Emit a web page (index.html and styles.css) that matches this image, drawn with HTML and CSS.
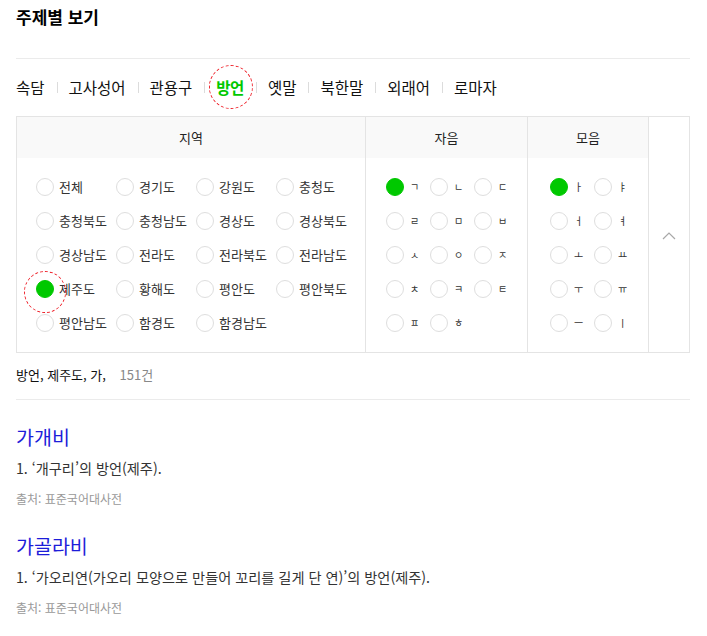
FILE: index.html
```html
<!DOCTYPE html>
<html lang="ko">
<head>
<meta charset="utf-8">
<title>주제별 보기</title>
<link rel="stylesheet" href="styles.css">
</head>
<body>
<div class="page">
  <h2 class="title">주제별 보기</h2>

  <ul class="tabs">
    <li class="tab">속담</li>
    <li class="tab">고사성어</li>
    <li class="tab">관용구</li>
    <li class="tab active marked">방언</li>
    <li class="tab">옛말</li>
    <li class="tab">북한말</li>
    <li class="tab">외래어</li>
    <li class="tab">로마자</li>
  </ul>

  <div class="filter">
    <div class="col col-region">
      <div class="col-head">지역</div>
      <div class="col-body grid-region">
        <label class="opt"><span class="radio"></span><span class="lbl">전체</span></label>
        <label class="opt"><span class="radio"></span><span class="lbl">경기도</span></label>
        <label class="opt"><span class="radio"></span><span class="lbl">강원도</span></label>
        <label class="opt"><span class="radio"></span><span class="lbl">충청도</span></label>
        <label class="opt"><span class="radio"></span><span class="lbl">충청북도</span></label>
        <label class="opt"><span class="radio"></span><span class="lbl">충청남도</span></label>
        <label class="opt"><span class="radio"></span><span class="lbl">경상도</span></label>
        <label class="opt"><span class="radio"></span><span class="lbl">경상북도</span></label>
        <label class="opt"><span class="radio"></span><span class="lbl">경상남도</span></label>
        <label class="opt"><span class="radio"></span><span class="lbl">전라도</span></label>
        <label class="opt"><span class="radio"></span><span class="lbl">전라북도</span></label>
        <label class="opt"><span class="radio"></span><span class="lbl">전라남도</span></label>
        <label class="opt"><span class="radio on marked"></span><span class="lbl">제주도</span></label>
        <label class="opt"><span class="radio"></span><span class="lbl">황해도</span></label>
        <label class="opt"><span class="radio"></span><span class="lbl">평안도</span></label>
        <label class="opt"><span class="radio"></span><span class="lbl">평안북도</span></label>
        <label class="opt"><span class="radio"></span><span class="lbl">평안남도</span></label>
        <label class="opt"><span class="radio"></span><span class="lbl">함경도</span></label>
        <label class="opt"><span class="radio"></span><span class="lbl">함경남도</span></label>
      </div>
    </div>
    <div class="col col-cons">
      <div class="col-head">자음</div>
      <div class="col-body grid-cons">
        <label class="opt"><span class="radio on"></span><span class="jamo">ㄱ</span></label>
        <label class="opt"><span class="radio"></span><span class="jamo">ㄴ</span></label>
        <label class="opt"><span class="radio"></span><span class="jamo">ㄷ</span></label>
        <label class="opt"><span class="radio"></span><span class="jamo">ㄹ</span></label>
        <label class="opt"><span class="radio"></span><span class="jamo">ㅁ</span></label>
        <label class="opt"><span class="radio"></span><span class="jamo">ㅂ</span></label>
        <label class="opt"><span class="radio"></span><span class="jamo">ㅅ</span></label>
        <label class="opt"><span class="radio"></span><span class="jamo">ㅇ</span></label>
        <label class="opt"><span class="radio"></span><span class="jamo">ㅈ</span></label>
        <label class="opt"><span class="radio"></span><span class="jamo">ㅊ</span></label>
        <label class="opt"><span class="radio"></span><span class="jamo">ㅋ</span></label>
        <label class="opt"><span class="radio"></span><span class="jamo">ㅌ</span></label>
        <label class="opt"><span class="radio"></span><span class="jamo">ㅍ</span></label>
        <label class="opt"><span class="radio"></span><span class="jamo">ㅎ</span></label>
      </div>
    </div>
    <div class="col col-vow">
      <div class="col-head">모음</div>
      <div class="col-body grid-vow">
        <label class="opt"><span class="radio on"></span><span class="jamo">ㅏ</span></label>
        <label class="opt"><span class="radio"></span><span class="jamo">ㅑ</span></label>
        <label class="opt"><span class="radio"></span><span class="jamo">ㅓ</span></label>
        <label class="opt"><span class="radio"></span><span class="jamo">ㅕ</span></label>
        <label class="opt"><span class="radio"></span><span class="jamo">ㅗ</span></label>
        <label class="opt"><span class="radio"></span><span class="jamo">ㅛ</span></label>
        <label class="opt"><span class="radio"></span><span class="jamo">ㅜ</span></label>
        <label class="opt"><span class="radio"></span><span class="jamo">ㅠ</span></label>
        <label class="opt"><span class="radio"></span><span class="jamo">ㅡ</span></label>
        <label class="opt"><span class="radio"></span><span class="jamo">ㅣ</span></label>
      </div>
    </div>
    <div class="col col-toggle">
      <svg class="chev" width="14" height="8" viewBox="0 0 14 8" aria-hidden="true"><polyline points="1,7 7,1 13,7" fill="none" stroke="#a8a8a8" stroke-width="1.2"/></svg>
    </div>
  </div>

  <div class="summary">방언, 제주도, 가, <span class="count">151건</span></div>

  <div class="entry">
    <div class="word">가개비</div>
    <p class="def">1. ‘개구리’의 방언(제주).</p>
    <p class="src">출처: 표준국어대사전</p>
  </div>
  <div class="entry">
    <div class="word">가골라비</div>
    <p class="def">1. ‘가오리연(가오리 모양으로 만들어 꼬리를 길게 단 연)’의 방언(제주).</p>
    <p class="src">출처: 표준국어대사전</p>
  </div>
</div>
</body>
</html>
```

FILE: styles.css
```css
* { box-sizing: border-box; }
html, body { margin: 0; padding: 0; background: #fff; }
body {
  font-family: "Noto Sans CJK KR", "Noto Sans", "Liberation Sans", sans-serif;
  color: #222;
}
.page {
  width: 674px;
  margin-left: 16px;
}
.title {
  margin: 0;
  height: 59px;
  padding-top: 5px;
  font-size: 17px;
  line-height: 24px;
  font-weight: 700;
  color: #000;
  border-bottom: 1px solid #ebebeb;
}
.tabs {
  list-style: none;
  margin: 18px 0 0;
  padding: 0;
  display: flex;
  align-items: center;
  height: 20px;
}
.tab {
  position: relative;
  font-size: 15.5px;
  line-height: 20px;
  color: #111;
  padding: 0 12px;
}
.tab:first-child { padding-left: 0; }
.tab + .tab::before {
  content: "";
  position: absolute;
  left: 0;
  top: 5px;
  width: 1px;
  height: 11px;
  background: #dcdcdc;
}
.tab.active {
  color: #00c800;
  font-weight: 700;
  letter-spacing: -0.5px;
}
.marked::after {
  content: "";
  position: absolute;
  border: 1px dashed #ee1c25;
  border-radius: 50%;
  pointer-events: none;
}
.tab.marked::after {
  width: 42px;
  height: 42px;
  left: 50%;
  top: 50%;
  transform: translate(-48%, -50%);
}
.filter {
  margin-top: 19px;
  display: flex;
  border: 1px solid #e4e4e4;
}
.col { border-right: 1px solid #e4e4e4; }
.col:last-child { border-right: 0; }
.col-region { width: 349px; }
.col-cons { width: 162px; }
.col-vow { width: 121px; }
.col-toggle {
  width: 40px;
  display: flex;
  align-items: center;
  justify-content: center;
}
.chev { display: block; margin-top: 2px; }
.col-head {
  height: 41px;
  background: #f9f9f9;
  text-align: center;
  font-size: 13px;
  line-height: 41px;
  color: #222;
}
.col-body {
  display: grid;
  row-gap: 16px;
  padding: 20px 0 20px;
  grid-auto-rows: 18px;
}
.grid-region { grid-template-columns: repeat(4, 80px); padding-left: 19px; }
.grid-cons { grid-template-columns: repeat(3, 44px); padding-left: 20px; }
.grid-vow { grid-template-columns: repeat(2, 44px); padding-left: 22px; }
.opt {
  display: flex;
  align-items: center;
  gap: 5px;
  height: 18px;
  white-space: nowrap;
}
.radio {
  position: relative;
  flex: none;
  width: 18px;
  height: 18px;
  border-radius: 50%;
  border: 1px solid #dedede;
  background: #fff;
}
.radio.on {
  background: #00c800;
  border-color: #00c800;
}
.radio.marked::after {
  width: 40px;
  height: 40px;
  left: -13px;
  top: -10px;
}
.lbl {
  font-size: 13px;
  line-height: 18px;
  color: #333;
}
.jamo {
  font-size: 10px;
  line-height: 18px;
  color: #333;
  margin-left: 1px;
}
.summary {
  padding: 12px 0 14px;
  font-size: 13px;
  line-height: 20px;
  color: #111;
  border-bottom: 1px solid #ebebeb;
}
.count { color: #888; margin-left: 10px; }
.entry { padding-top: 24px; }
.entry + .entry { padding-top: 25px; }
.word {
  font-size: 19.5px;
  line-height: 26px;
  color: #1d1dd9;
}
.def {
  margin: 8px 0 0;
  font-size: 14.2px;
  line-height: 20px;
  color: #333;
}
.src {
  margin: 12px 0 0;
  font-size: 12px;
  line-height: 18px;
  color: #999;
}
```
